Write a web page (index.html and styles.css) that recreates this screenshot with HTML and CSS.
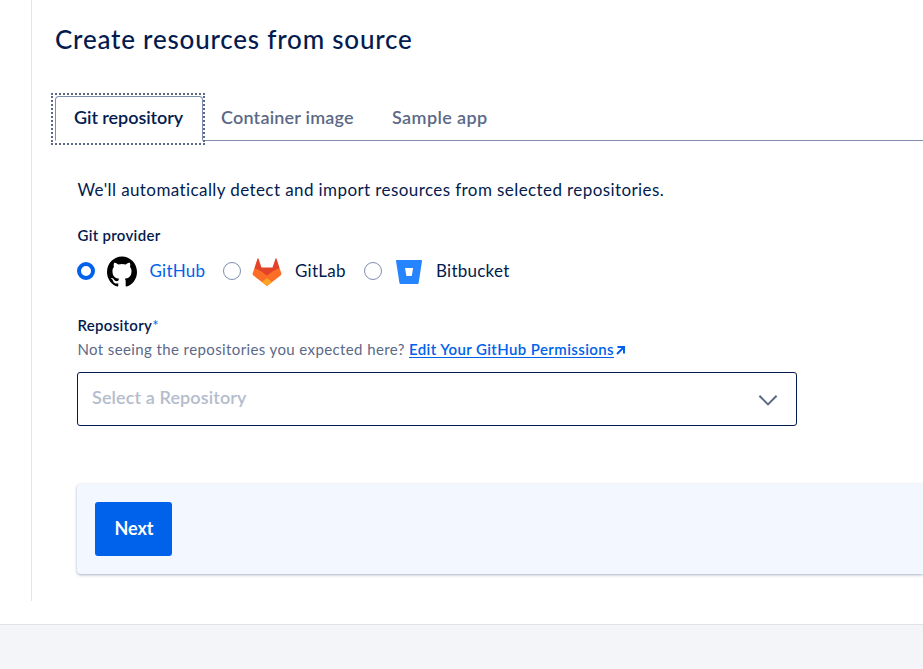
FILE: index.html
```html
<!DOCTYPE html>
<html lang="en">
<head>
<meta charset="utf-8">
<title>Create resources from source</title>
<link rel="stylesheet" href="styles.css">
</head>
<body>
<main class="page">
  <section class="panel">
    <h1 class="title"><span>Create resources from source</span></h1>
    <nav class="tabs">
      <a class="tab active"><span>Git repository</span></a>
      <a class="tab"><span class="t-container">Container image</span></a>
      <a class="tab"><span class="t-sample">Sample app</span></a>
    </nav>
    <div class="content">
      <p class="intro"><span>We'll automatically detect and import resources from selected repositories.</span></p>
      <h2 class="label provider-label"><span>Git provider</span></h2>
      <div class="providers">
        <label class="provider selected">
          <span class="radio"></span>
          <svg class="logo" width="30" height="31" viewBox="0 0 24 24" preserveAspectRatio="none"><path fill="#000" d="M12 .297c-6.63 0-12 5.373-12 12 0 5.303 3.438 9.8 8.205 11.385.6.113.82-.258.82-.577 0-.285-.01-1.04-.015-2.04-3.338.724-4.042-1.61-4.042-1.61C4.422 18.07 3.633 17.7 3.633 17.7c-1.087-.744.084-.729.084-.729 1.205.084 1.838 1.236 1.838 1.236 1.07 1.835 2.809 1.305 3.495.998.108-.776.417-1.305.76-1.605-2.665-.3-5.466-1.332-5.466-5.93 0-1.31.465-2.38 1.235-3.22-.135-.303-.54-1.523.105-3.176 0 0 1.005-.322 3.3 1.23.96-.267 1.98-.399 3-.405 1.02.006 2.04.138 3 .405 2.28-1.552 3.285-1.23 3.285-1.23.645 1.653.24 2.873.12 3.176.765.84 1.23 1.91 1.23 3.22 0 4.61-2.805 5.625-5.475 5.92.42.36.81 1.096.81 2.22 0 1.606-.015 2.896-.015 3.286 0 .315.21.69.825.57C20.565 22.092 24 17.592 24 12.297c0-6.627-5.373-12-12-12"/></svg>
          <span class="name">GitHub</span>
        </label>
        <label class="provider">
          <span class="radio"></span>
          <svg class="logo gitlab" width="30" height="28" viewBox="0 0 30 28"><path fill="#e24329" d="M2.3 10.4 5.5.5Q6 0 6.4.5L9.5 9.4H20.5L23.6.5Q24 0 24.5.5L27.7 10.4 20.2 14.5 15 18.5 9.8 14.5Z"/><path fill="#fc6d26" d="M2.3 10.4.6 15.6Q.4 16.8 1.4 17.5L15 28 28.6 17.5Q29.6 16.8 29.4 15.6L27.7 10.4Q23.6 11.3 20.2 13.7L15 17.7 9.8 13.7Q6.4 11.3 2.3 10.4Z"/><path fill="#fca326" d="M9.9 24 15 20.2 20.1 24 15 28Z"/></svg>
          <span class="name">GitLab</span>
        </label>
        <label class="provider">
          <span class="radio"></span>
          <svg class="logo bitbucket" width="26" height="24" viewBox="0 0 26 24"><path fill="#2684ff" fill-rule="evenodd" d="M.8 0H25.2Q26.1 0 26 .9L22.6 23.2Q22.5 24 21.6 24H4.6Q3.7 24 3.5 23.2L0 .9Q-.1 0 .8 0ZM9 8 10.4 16H15.8L17.1 8Z"/></svg>
          <span class="name">Bitbucket</span>
        </label>
      </div>
      <h2 class="label repo-label"><span>Repository</span><sup>*</sup></h2>
      <p class="help"><span class="hint">Not seeing the repositories you expected here?</span><a class="edit">Edit Your GitHub Permissions</a><svg class="arrow" width="9" height="9" viewBox="0 0 9 9"><path fill="none" stroke="#0061eb" stroke-width="2" d="M1.5 1H8V7.5M8 1 1 8"/></svg></p>
      <div class="select">
        <span class="placeholder">Select a Repository</span>
        <svg width="20" height="13" viewBox="0 0 20 13"><path fill="none" stroke="#5b6987" stroke-width="2" d="M1.4 1.8 10 10.4 18.6 1.8"/></svg>
      </div>
      <div class="actions"><button class="next">Next</button></div>
    </div>
  </section>
</main>
</body>
</html>
```
FILE: styles.css
```css
* { box-sizing: border-box; }
body { margin: 0; height: 669px; overflow: hidden; background: #f3f5f9; color: #031b4e; font-family: Lato, "Liberation Sans", sans-serif; }
h1, h2, p { margin: 0; }
.page { height: 625px; background: #fff; border-bottom: 1px solid #dfe2e7; }
.panel { height: 601px; margin-left: 31px; padding: 20px 0 0 23px; border-left: 1px solid #e5e5e5; }
.title { height: 76px; font-size: 26px; line-height: 38px; font-weight: 500; letter-spacing: .79px; white-space: nowrap; }
.tabs { display: grid; grid-template-columns: 148px 171px 1fr; height: 45px; }
.tab { display: block; padding-left: 18px; border-bottom: 1px solid #7f8dae; color: #5b6987; font-size: 18px; line-height: 43px; font-weight: 600; white-space: nowrap; }
.tab.active { position: relative; line-height: 41px; letter-spacing: -.06px; border: 1px solid #7f8dae; border-bottom-color: #fff; border-radius: 4px 4px 0 0; color: #031b4e; }
.tab.active::before { content: ""; position: absolute; inset: -4px -3px -5px -5px; border: 2px dotted #5b6987; }
.t-container { letter-spacing: .2px; }
.t-sample { letter-spacing: .4px; }
.content { padding-left: 22px; }
.intro { padding-top: 37px; height: 84px; font-size: 17px; line-height: 24px; letter-spacing: .41px; text-indent: .5px; white-space: nowrap; }
.label { font-size: 15px; line-height: 20px; font-weight: 600; letter-spacing: .3px; text-indent: .5px; white-space: nowrap; }
.label sup { font-size: 15px; line-height: 0; vertical-align: baseline; font-weight: 400; color: #0061eb; }
.providers { display: grid; grid-template-columns: 146px 141px 1fr; height: 51px; padding-top: 1px; }
.provider { display: grid; grid-template-columns: 30px 42px auto; align-items: center; height: 50px; font-size: 17px; line-height: 24px; }
.radio { width: 18px; height: 18px; border: 1px solid #7f8dae; border-radius: 50%; }
.selected .radio { border: 4px solid #0061eb; }
.selected .name { padding-left: .5px; color: #0061eb; }
.name { letter-spacing: .25px; }
.gitlab { margin: 1px 0 0 -1px; }
.bitbucket { margin: 2px 0 0 2px; }
.repo-label { margin-top: 19px; }
.help { display: flex; align-items: center; height: 28px; padding-bottom: 1px; font-size: 15px; line-height: 20px; color: #5b6987; white-space: nowrap; }
.hint { width: 332px; letter-spacing: .39px; text-indent: .5px; }
.edit { width: 205px; margin-right: 2px; color: #0061eb; font-weight: 600; letter-spacing: .4px; text-decoration: underline; text-underline-offset: 2px; }
.arrow { margin-top: 3px; }
.select { display: flex; align-items: center; justify-content: space-between; width: 720px; height: 54px; margin-top: 9px; padding: 0 18px 0 14px; border: 1px solid #031b4e; border-radius: 3px; }
.select svg { margin-top: 2px; }
.placeholder { margin-top: -4px; color: #b4bccc; font-size: 18px; font-weight: 600; letter-spacing: .11px; }
.actions { height: 90px; margin-top: 58px; padding: 18px; background: #f3f7ff; border-radius: 4px 0 0 4px; box-shadow: 0 1px 3px rgba(3, 27, 78, .35); }
.next { width: 77px; height: 54px; padding: 0 0 2px 1px; border: 0; border-radius: 3px; background: #0061eb; color: #fff; font: 700 18px Lato, "Liberation Sans", sans-serif; letter-spacing: -.1px; }
```
